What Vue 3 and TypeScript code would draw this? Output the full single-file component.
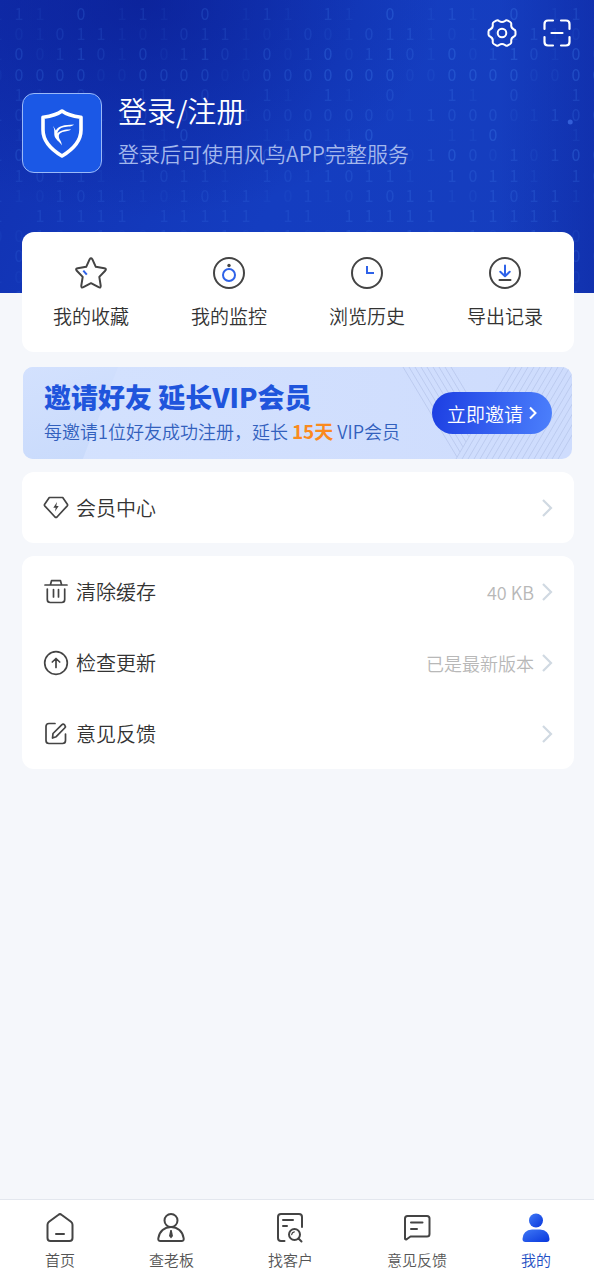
<script setup lang="ts">
interface Shortcut {
  id: string
  label: string
}

interface MenuItem {
  id: string
  label: string
  value?: string
}

interface Tab {
  id: string
  label: string
  active?: boolean
}

interface Digit {
  char: string
  x: number
  y: number
  opacity: number
}

const shortcuts: Shortcut[] = [
  { id: 'favorite', label: '我的收藏' },
  { id: 'monitor', label: '我的监控' },
  { id: 'history', label: '浏览历史' },
  { id: 'export', label: '导出记录' },
]

const menuGroups: MenuItem[][] = [
  [{ id: 'vip', label: '会员中心' }],
  [
    { id: 'cache', label: '清除缓存', value: '40 KB' },
    { id: 'update', label: '检查更新', value: '已是最新版本' },
    { id: 'feedback', label: '意见反馈' },
  ],
]

const tabs: Tab[] = [
  { id: 'home', label: '首页' },
  { id: 'boss', label: '查老板' },
  { id: 'customer', label: '找客户' },
  { id: 'message', label: '意见反馈' },
  { id: 'mine', label: '我的', active: true },
]

// Each row of the header texture: the digits, then their strength from 0 to 3.
const digitRows: [string, string][] = [
  ['110001', '210301'],
  ['010111', '112221'],
  ['001101', '312321'],
  ['000000', '333311'],
  ['110000', '210200'],
  ['000011', '222112'],
  ['110000', '113000'],
  ['000101', '321212'],
  ['101110', '222210'],
  ['101011', '112222'],
  ['011111', '022222'],
  ['010010', '121021'],
  ['001101', '212110'],
  ['010011', '101221'],
]

const digits: Digit[] = digitRows.flatMap(([chars, strengths], row) =>
  chars.split('').map((char, col) => ({
    char,
    x: 10 + Math.round(col * 20.6),
    y: 20 + Math.round(row * 20.2),
    opacity: Number(strengths[col]) * 0.1,
  })),
)

// Banner hatching: the left strokes stop where they meet the right-hand set.
const leftHatch = Array.from({ length: 9 }, (_, n) => {
  const drop = Math.round((107 - 6 * n) / 1.19)
  return `M${21 + 6 * n} 0 l${Math.round(drop * 0.6)} ${drop}`
})
const rightHatch = Array.from({ length: 18 }, (_, n) => `M${128 + 6 * n} 0 l-54 92`)
</script>

<template>
  <div class="page">
    <main class="content">
      <div class="backdrop" aria-hidden="true">
        <svg class="texture">
          <defs>
            <pattern id="bits" x="318" y="0" width="124" height="283" patternUnits="userSpaceOnUse">
              <text
                v-for="(d, i) in digits"
                :key="i"
                :x="d.x"
                :y="d.y"
                :opacity="d.opacity"
                class="digit"
              >{{ d.char }}</text>
            </pattern>
            <pattern id="bits-left" x="9" href="#bits" />
          </defs>
          <rect width="318" height="100%" fill="url(#bits-left)" opacity="0.75" />
          <rect x="318" width="100%" height="100%" fill="url(#bits)" />
          <circle cx="96%" cy="122" r="2.500" fill="#4a7cf0" opacity="0.6" />
        </svg>
      </div>

      <header class="topbar">
        <button class="icon-button" type="button" aria-label="设置">
          <svg width="30" height="30" viewBox="0 0 30 30" fill="none" stroke="#fff" stroke-width="2" stroke-linejoin="round">
            <path d="M9.200 2.600 Q10.800 1.700 12 3 Q15 5 18 3 Q19.200 1.700 20.800 2.600 L23.200 4 Q24.700 5 24.200 6.800 Q24 10.200 27 11.500 Q28.500 12 28.500 13.400 V16.600 Q28.500 18 27 18.500 Q24 19.800 24.200 23.200 Q24.700 25 23.200 26 L20.800 27.400 Q19.200 28.300 18 27 Q15 25 12 27 Q10.800 28.300 9.200 27.400 L6.800 26 Q5.300 25 5.800 23.200 Q6 19.800 3 18.500 Q1.500 18 1.500 16.600 V13.400 Q1.500 12 3 11.500 Q6 10.200 5.800 6.800 Q5.300 5 6.800 4 Z" />
            <circle cx="15" cy="15" r="4.300" />
          </svg>
        </button>
        <button class="icon-button" type="button" aria-label="扫一扫">
          <svg width="28" height="28" viewBox="0 0 28 28" fill="none" stroke="#fff" stroke-width="2.200" stroke-linecap="round">
            <path d="M1.500 10 V5 Q1.500 1.500 5 1.500 H10 M18 1.500 H23 Q26.500 1.500 26.500 5 V10 M26.500 18 V23 Q26.500 26.500 23 26.500 H18 M10 26.500 H5 Q1.500 26.500 1.500 23 V18 M8.500 14 H19.500" />
          </svg>
        </button>
      </header>

      <a class="profile" href="#login">
        <span class="avatar">
          <svg width="44" height="50" viewBox="0 0 44 50" fill="none">
            <path d="M22 3 C28 7.500 34 8.300 41 9.300 V22 C41 33 32 42 22 48 C12 42 3 33 3 22 V9.300 C10 8.300 16 7.500 22 3 Z" stroke="#fff" stroke-width="3.600" stroke-linejoin="round" />
            <path d="M13 18 C14.500 20 15 21 15.900 22.500 C18 18 24 16.800 34 16.500 C32 18.800 28 18.300 23.500 19.300 C20 20.200 17.800 22 17.300 25.500 C20.500 22 25 21.500 31 21.200 C29 23.500 26 22.800 22.500 24 C19.500 25.200 18.400 26.600 18.900 29.200 C19.500 32 22 33.500 21.700 37.500 C20 33.500 14.500 31.500 14.300 26.500 C14.200 23.500 14.700 21 13 18 Z" fill="#fff" />
          </svg>
        </span>
        <span class="profile-text">
          <span class="profile-title">登录/注册</span>
          <span class="profile-hint">登录后可使用风鸟APP完整服务</span>
        </span>
      </a>

      <nav class="card shortcuts" aria-label="快捷入口">
        <a v-for="s in shortcuts" :key="s.id" class="shortcut" :href="'#' + s.id">
          <svg width="34" height="34" viewBox="0 0 34 34" fill="none" stroke="#444" stroke-width="2" stroke-linecap="round" stroke-linejoin="round">
            <template v-if="s.id === 'favorite'">
              <path d="M15.700 3.200 Q17 1.200 18.300 3.200 L21.800 10.800 L30.300 12.200 Q33 12.800 31.200 14.700 L25.300 20.900 L26.700 29.600 Q26.900 32.300 24.600 31.200 L17 27.200 L9.400 31.200 Q7.100 32.300 7.300 29.600 L8.700 20.900 L2.800 14.700 Q1 12.800 3.700 12.200 L12.200 10.800 Z" />
              <path d="M9.300 14.700 L12.800 18.700" stroke="#2e62e8" stroke-linecap="butt" />
            </template>
            <template v-else-if="s.id === 'monitor'">
              <circle cx="17" cy="17" r="15" />
              <circle cx="17" cy="9.500" r="1.700" fill="#444" stroke="none" />
              <circle cx="17" cy="19" r="6" stroke="#2e62e8" />
            </template>
            <template v-else-if="s.id === 'history'">
              <circle cx="17" cy="17" r="15" />
              <path d="M17 10 V17 H24" stroke="#2e62e8" stroke-linecap="butt" stroke-linejoin="miter" />
            </template>
            <template v-else>
              <circle cx="17" cy="17" r="15" />
              <path d="M17 9.500 V20 M12.300 15.800 L17 20.300 L21.700 15.800" stroke="#2e62e8" />
              <path d="M11.500 24 H22.500" />
            </template>
          </svg>
          <span>{{ s.label }}</span>
        </a>
      </nav>

      <section class="banner">
        <svg class="banner-lines" width="190" height="92" viewBox="0 0 190 92" fill="none" stroke="#bccbef" aria-hidden="true">
          <path v-for="d in leftHatch" :key="d" :d="d" />
          <path v-for="d in rightHatch" :key="d" :d="d" />
        </svg>
        <div class="banner-text">
          <h2>邀请好友 延长VIP会员</h2>
          <p>每邀请1位好友成功注册，延长<strong>15天</strong>VIP会员</p>
        </div>
        <button class="invite" type="button">
          立即邀请
          <svg width="8" height="14" viewBox="0 0 8 14" fill="none" stroke="#fff" stroke-width="2">
            <path d="M1 1.500 L6.500 7 L1 12.500" />
          </svg>
        </button>
      </section>

      <ul v-for="(group, g) in menuGroups" :key="g" class="card menu">
        <li v-for="item in group" :key="item.id">
          <a class="menu-item" :href="'#' + item.id">
            <svg width="26" height="26" viewBox="0 0 26 26" fill="none" stroke="#444" stroke-width="1.700" stroke-linecap="round" stroke-linejoin="round">
              <template v-if="item.id === 'vip'">
                <path d="M6.300 2.500 H19.700 L24.500 9.500 Q24.800 10.200 24.300 10.800 L14 22 Q13 22.900 12 22 L1.700 10.800 Q1.200 10.200 1.500 9.500 Z" />
                <path d="M14 7 L10.300 12.800 H12.700 L12 16.500 L15.700 11 H13.300 Z" fill="#444" stroke="none" />
              </template>
              <template v-else-if="item.id === 'cache'">
                <path d="M2 6 H24 M7.500 5.500 L8.500 1.700 H17.500 L18.500 5.500 M4.300 10 V20.500 Q4.300 23.500 7.300 23.500 H18.700 Q21.700 23.500 21.700 20.500 V10 M10.500 10.500 V18 M15.500 10.500 V18" />
              </template>
              <template v-else-if="item.id === 'update'">
                <circle cx="13" cy="13" r="11.300" />
                <path d="M13 17.500 V9 M9.300 12 L13 8.500 L16.700 12" />
              </template>
              <template v-else>
                <path d="M12 2.500 H6 Q3 2.500 3 5.500 V19.500 Q3 22.500 6 22.500 H19.500 Q22.500 22.500 22.500 19.500 V13" />
                <path d="M9.500 17 L10 12.500 L18.700 3.800 Q20.200 2.500 21.700 4 Q23 5.500 21.700 7 L13.200 15.700 Z" />
              </template>
            </svg>
            <span class="menu-label">{{ item.label }}</span>
            <span v-if="item.value" class="menu-value">{{ item.value }}</span>
            <svg class="chevron" width="12" height="20" viewBox="0 0 12 20" fill="none" stroke="#d0d9e2" stroke-width="2.200">
              <path d="M2 2 L10 10 L2 18" />
            </svg>
          </a>
        </li>
      </ul>
    </main>

    <nav class="tabbar" aria-label="主导航">
      <a
        v-for="t in tabs"
        :key="t.id"
        class="tab"
        :class="{ active: t.active }"
        :href="'#' + t.id"
        :aria-current="t.active ? 'page' : undefined"
      >
        <svg width="30" height="32" viewBox="0 0 30 32" fill="none" stroke="#444" stroke-width="2" stroke-linecap="round" stroke-linejoin="round">
          <template v-if="t.id === 'home'">
            <path d="M13.500 2.700 Q15 1.500 16.500 2.700 L26 9.800 Q27.500 11 27.500 12.700 V26 Q27.500 29 24.500 29 H5.500 Q2.500 29 2.500 26 V12.700 Q2.500 11 4 9.800 Z M11 22 H19" />
          </template>
          <template v-else-if="t.id === 'boss'">
            <circle cx="15" cy="8.500" r="6.500" />
            <path d="M4.500 29 Q2 29 2.300 26.300 C3.300 19.500 8.500 15 15 15 C21.500 15 26.700 19.500 27.700 26.300 Q28 29 25.500 29 Z" />
            <path d="M14.300 18 H15.700 L17 24 L15 26.500 L13 24 Z" fill="#444" stroke="none" />
          </template>
          <template v-else-if="t.id === 'customer'">
            <path d="M9.500 29 H6 Q3 29 3 26 V5 Q3 2 6 2 H24 Q27 2 27 5 V15 M8 8 H18 M8 14 H12" />
            <circle cx="19.500" cy="22.500" r="5.500" />
            <path d="M16.700 22.500 Q17 20.200 19.300 19.800" stroke-width="1.300" />
            <path d="M23.500 26.500 L26.500 29.500" />
          </template>
          <template v-else-if="t.id === 'message'">
            <path d="M3 26.500 V6.500 Q3 4 5.500 4 H25 Q27.500 4 27.500 6.500 V22 Q27.500 24.500 25 24.500 H8.500 L5 27 Q3 28 3 26.500 Z M9 10.500 H20.500 M9 17 H15" />
          </template>
          <template v-else>
            <defs>
              <linearGradient id="me" x1="0" y1="0" x2="1" y2="1">
                <stop offset="0" stop-color="#4079f6" />
                <stop offset="1" stop-color="#0837dc" />
              </linearGradient>
            </defs>
            <circle cx="15" cy="8.500" r="7" fill="url(#me)" stroke="none" />
            <path d="M11 17.500 H19 Q28 18 28.500 27 Q28.500 30 25.500 30 H4.500 Q1.500 30 1.500 27 Q2 18 11 17.500 Z" fill="url(#me)" stroke="none" />
          </template>
        </svg>
        <span>{{ t.label }}</span>
      </a>
    </nav>
  </div>
</template>

<style>
body {
  margin: 0;
  background: #f5f7fb;
}
</style>

<style scoped>
.page {
  display: flex;
  flex-direction: column;
  min-height: 100vh;
  background: #f5f7fb;
  color: #333;
  font-family: "Noto Sans CJK SC", "Noto Sans", sans-serif;
  font-weight: 350;
}

a {
  color: inherit;
  text-decoration: none;
}

button {
  padding: 0;
  border: 0;
  background: none;
  color: inherit;
  font: inherit;
  cursor: pointer;
}

svg {
  display: block;
  flex: none;
}

.content {
  position: relative;
  isolation: isolate;
  flex: 1;
  padding: 0 20px 24px 22px;
}

.backdrop {
  position: absolute;
  inset: 0 0 auto;
  z-index: -1;
  height: 293px;
  background:
    radial-gradient(ellipse 50% 75% at 24% 0%, rgba(8, 24, 138, 0.6), transparent),
    linear-gradient(90deg, transparent 84%, rgba(10, 30, 150, 0.4)),
    linear-gradient(115deg, #1130b0, #143dc0 50%, #163ebe);
}

.texture {
  width: 100%;
  height: 100%;
}

.digit {
  fill: #3f82f0;
  font-family: "Noto Sans CJK SC", sans-serif;
  font-size: 16px;
  font-weight: 400;
  text-anchor: middle;
}

.topbar {
  display: flex;
  align-items: center;
  justify-content: flex-end;
  gap: 26px;
  height: 66px;
  padding-right: 3px;
}

.profile {
  display: flex;
  align-items: flex-start;
  gap: 16px;
  margin: 27px 0 59px;
  color: #fff;
}

.avatar {
  display: flex;
  align-items: center;
  justify-content: center;
  box-sizing: border-box;
  width: 80px;
  height: 80px;
  border: 1px solid #9ab9f8;
  border-radius: 12px;
  background: #1b58e6;
}

.profile-text {
  display: flex;
  flex-direction: column;
  gap: 6px;
  margin-top: -3px;
}

.profile-title {
  font-size: 29px;
  line-height: 40px;
}

.profile-hint {
  color: #a3b7ec;
  font-size: 21px;
  line-height: 34px;
}

.card {
  margin: 0 0 13px;
  border-radius: 12px;
  background: #fff;
}

.shortcuts {
  display: grid;
  grid-template-columns: repeat(4, 1fr);
  margin-bottom: 15px;
}

.shortcut {
  display: flex;
  flex-direction: column;
  align-items: center;
  gap: 12px;
  padding: 24px 0 22px;
  font-size: 19px;
  line-height: 28px;
}

.banner {
  position: relative;
  display: flex;
  align-items: center;
  justify-content: space-between;
  height: 92px;
  margin: 0 2px 13px 1px;
  padding: 0 20px 0 21px;
  box-sizing: border-box;
  border-radius: 10px;
  background: linear-gradient(90deg, #d4e2fe, #cedcfd);
  overflow: hidden;
}

.banner::before {
  content: "";
  position: absolute;
  inset: 0 auto 0 0;
  width: 95px;
  background: linear-gradient(160deg, #d3e1fe, #c8dafb);
  clip-path: polygon(0 0, 100% 0, 63% 100%, 0 100%);
}

.banner-lines {
  position: absolute;
  top: 0;
  right: 0;
}

.banner-text {
  position: relative;
}

.banner h2 {
  margin: 0;
  color: #1f55dc;
  font-size: 27px;
  font-weight: 900;
  line-height: 36px;
}

.banner p {
  margin: 0;
  color: #3260bd;
  font-size: 18px;
  line-height: 32px;
}

.banner strong {
  margin: 0 4px;
  color: #fa8a1e;
  font-size: 19px;
  font-weight: 700;
}

.banner .invite {
  position: relative;
  display: flex;
  align-items: center;
  justify-content: center;
  gap: 6px;
  width: 120px;
  height: 42px;
  border-radius: 21px;
  background: linear-gradient(100deg, #1c3ee2, #4c80fc);
  color: #fff;
  font-size: 19px;
}

.menu {
  padding: 0;
  list-style: none;
}

.menu-item {
  display: flex;
  align-items: center;
  height: 71px;
  padding: 0 21px;
}

.menu-label {
  flex: 1;
  margin-left: 7px;
  font-size: 20px;
}

.menu-value {
  margin-right: 7px;
  color: #b8b8b8;
  font-size: 18px;
}

.tabbar {
  display: flex;
  justify-content: space-between;
  padding: 12px 43px 9px 45px;
  border-top: 1px solid #e3e7ee;
  background: #fff;
}

.tab {
  display: flex;
  flex-direction: column;
  align-items: center;
  gap: 5px;
  color: #555;
  font-size: 15px;
  line-height: 22px;
}

.tab.active {
  color: #1f4fc4;
}
</style>
